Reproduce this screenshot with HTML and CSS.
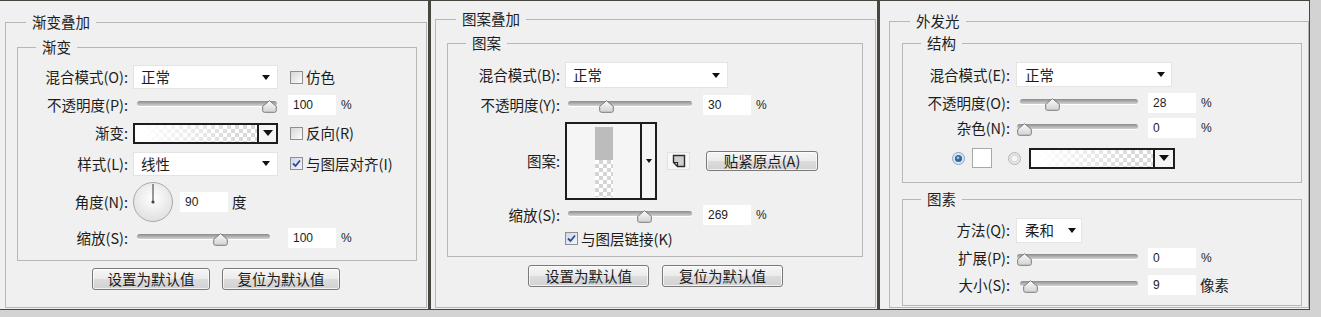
FILE: index.html
```html
<!DOCTYPE html>
<html lang="zh-CN">
<head>
  <meta charset="UTF-8">
  <meta name="viewport" content="width=device-width, initial-scale=1.0">
  <title>图层样式</title>
  <link rel="stylesheet" href="styles.css">
</head>
<body>
  <svg class="defs" width="0" height="0">
    <defs>
      <linearGradient id="thumbFill" x1="0" y1="0" x2="0" y2="1">
        <stop offset="0" stop-color="#fbfbfb"/>
        <stop offset="1" stop-color="#d2d2d2"/>
      </linearGradient>
      <radialGradient id="dialFill" cx="50%" cy="40%" r="60%">
        <stop offset="0" stop-color="#ffffff"/>
        <stop offset="1" stop-color="#e0e0e0"/>
      </radialGradient>
    </defs>
    <symbol id="thumb" viewBox="0 0 15 13">
      <path d="M7.5 .7 L14.3 6.3 V10.5 Q14.3 12.3 12.5 12.3 H2.5 Q.7 12.3 .7 10.5 V6.3 Z" fill="url(#thumbFill)" stroke="#7b7b7b"/>
    </symbol>
    <symbol id="tick" viewBox="0 0 11 11">
      <path d="M2 5.5 L4.5 8 L9 2.5" fill="none" stroke="#2c4a9a" stroke-width="1.8"/>
    </symbol>
  </svg>

  <div class="dialogs">

    <!-- 渐变叠加 -->
    <section class="panel panel-gradient">
      <fieldset class="group outer">
        <legend>渐变叠加</legend>
        <fieldset class="group inner">
          <legend>渐变</legend>
          <div class="rows">
            <div class="row">
              <span class="lbl">混合模式(O):</span>
              <div class="select"><span>正常</span><i class="caret"></i></div>
              <label class="check"><span class="box"></span>仿色</label>
            </div>
            <div class="row">
              <span class="lbl">不透明度(P):</span>
              <div class="slider" style="--v: 1"><div class="track"></div><svg class="thumb"><use href="#thumb"/></svg></div>
              <span class="num">100</span><span class="unit pct">%</span>
            </div>
            <div class="row">
              <span class="lbl">渐变:</span>
              <div class="grad-pick"><span class="grad"></span><span class="drop"><i class="caret"></i></span></div>
              <label class="check"><span class="box"></span>反向(R)</label>
            </div>
            <div class="row">
              <span class="lbl">样式(L):</span>
              <div class="select"><span>线性</span><i class="caret"></i></div>
              <label class="check"><span class="box on"><svg width="11" height="11"><use href="#tick"/></svg></span>与图层对齐(I)</label>
            </div>
            <div class="row">
              <span class="lbl">角度(N):</span>
              <svg class="dial" width="40" height="40" viewBox="0 0 40 40">
                <circle cx="20" cy="20" r="19.5" fill="url(#dialFill)" stroke="#a9a9a9"/>
                <line x1="20" y1="20" x2="20" y2="2" stroke="#555" stroke-width="1.2"/>
                <circle cx="20" cy="20" r="1.6" fill="#444"/>
              </svg>
              <span class="num">90</span><span class="unit">度</span>
            </div>
            <div class="row">
              <span class="lbl">缩放(S):</span>
              <div class="slider short" style="--v: .64"><div class="track"></div><svg class="thumb"><use href="#thumb"/></svg></div>
              <span class="num">100</span><span class="unit pct">%</span>
            </div>
          </div>
        </fieldset>
        <div class="buttons">
          <button class="btn">设置为默认值</button>
          <button class="btn">复位为默认值</button>
        </div>
      </fieldset>
    </section>

    <!-- 图案叠加 -->
    <section class="panel panel-pattern">
      <fieldset class="group outer">
        <legend>图案叠加</legend>
        <fieldset class="group inner">
          <legend>图案</legend>
          <div class="rows">
            <div class="row">
              <span class="lbl">混合模式(B):</span>
              <div class="select"><span>正常</span><i class="caret"></i></div>
            </div>
            <div class="row">
              <span class="lbl">不透明度(Y):</span>
              <div class="slider" style="--v: .28"><div class="track"></div><svg class="thumb"><use href="#thumb"/></svg></div>
              <span class="num">30</span><span class="unit pct">%</span>
            </div>
            <div class="row">
              <span class="lbl">图案:</span>
              <div class="pattern-pick">
                <span class="preview"><span class="pat"></span></span>
                <span class="drop"><i class="caret tiny"></i></span>
              </div>
              <span class="icon-btn">
                <svg width="14" height="14" viewBox="0 0 14 14">
                  <path d="M1.5 1.5 H12.5 V12.5 H5.5 L1.5 8.5 Z" fill="#cfcfcf" stroke="#2b2b2b" stroke-width="1.4"/>
                  <path d="M1.5 8.5 H5.5 V12.5" fill="none" stroke="#2b2b2b" stroke-width="1.2"/>
                </svg>
              </span>
              <button class="btn snap">贴紧原点(A)</button>
            </div>
            <div class="row">
              <span class="lbl">缩放(S):</span>
              <div class="slider" style="--v: .63"><div class="track"></div><svg class="thumb"><use href="#thumb"/></svg></div>
              <span class="num">269</span><span class="unit pct">%</span>
            </div>
            <div class="row">
              <span class="lbl"></span>
              <label class="check flush"><span class="box on"><svg width="11" height="11"><use href="#tick"/></svg></span>与图层链接(K)</label>
            </div>
          </div>
        </fieldset>
        <div class="buttons">
          <button class="btn">设置为默认值</button>
          <button class="btn">复位为默认值</button>
        </div>
      </fieldset>
    </section>

    <!-- 外发光 -->
    <section class="panel panel-glow">
      <fieldset class="group outer">
        <legend>外发光</legend>
        <fieldset class="group inner">
          <legend>结构</legend>
          <div class="rows">
            <div class="row">
              <span class="lbl">混合模式(E):</span>
              <div class="select"><span>正常</span><i class="caret"></i></div>
            </div>
            <div class="row">
              <span class="lbl">不透明度(O):</span>
              <div class="slider" style="--v: .24"><div class="track"></div><svg class="thumb"><use href="#thumb"/></svg></div>
              <span class="num">28</span><span class="unit pct">%</span>
            </div>
            <div class="row">
              <span class="lbl">杂色(N):</span>
              <div class="slider wide" style="--v: 0"><div class="track"></div><svg class="thumb"><use href="#thumb"/></svg></div>
              <span class="num">0</span><span class="unit pct">%</span>
            </div>
            <div class="row radios">
              <svg class="radio" width="13" height="13" viewBox="0 0 13 13">
                <circle cx="6.5" cy="6.5" r="6" fill="#dde7f1" stroke="#8aa2bc"/>
                <circle cx="6.5" cy="6.5" r="3.6" fill="#2d6aa3"/>
                <circle cx="6" cy="5.8" r="1.4" fill="#8fc3ee"/>
              </svg>
              <span class="color-swatch"></span>
              <svg class="radio off" width="13" height="13" viewBox="0 0 13 13">
                <circle cx="6.5" cy="6.5" r="6" fill="#e8e8e8" stroke="#b4b4b4"/>
                <circle cx="6.5" cy="6.5" r="3.6" fill="#f6f6f6" stroke="#d0d0d0"/>
              </svg>
              <div class="grad-pick"><span class="grad"></span><span class="drop"><i class="caret"></i></span></div>
            </div>
          </div>
        </fieldset>
        <fieldset class="group inner">
          <legend>图素</legend>
          <div class="rows">
            <div class="row">
              <span class="lbl">方法(Q):</span>
              <div class="select narrow"><span>柔和</span><i class="caret"></i></div>
            </div>
            <div class="row">
              <span class="lbl">扩展(P):</span>
              <div class="slider wide" style="--v: 0"><div class="track"></div><svg class="thumb"><use href="#thumb"/></svg></div>
              <span class="num">0</span><span class="unit pct">%</span>
            </div>
            <div class="row">
              <span class="lbl">大小(S):</span>
              <div class="slider" style="--v: .03"><div class="track"></div><svg class="thumb"><use href="#thumb"/></svg></div>
              <span class="num">9</span><span class="unit">像素</span>
            </div>
          </div>
        </fieldset>
      </fieldset>
    </section>

  </div>
</body>
</html>
```

FILE: styles.css
```css
body {
  margin: 0;
  background: #d3d3d3;
  color: #1c1c1c;
  font-family: "Noto Sans CJK SC", sans-serif;
  font-size: 14.5px;
  line-height: 16px;
}
.defs {
  position: absolute;
  width: 0;
  height: 0;
}
.dialogs {
  display: flex;
}

/* panels */
.panel {
  box-sizing: border-box;
  height: 310px;
  display: flex;
  flex-direction: column;
  background: #f0f0f0;
  border-top: 1px solid #46463e;
  border-bottom: 1px solid #46463e;
  border-right: 3px solid #47473f;
}
.panel-gradient {
  width: 431px;
  padding: 13px 1px 1px 5px;
}
.panel-pattern {
  width: 449px;
  padding: 10px 1px 1px 4px;
}
.panel-glow {
  width: 430px;
  padding: 12px 0 1px 9px;
  border-right-width: 1px;
}

/* group boxes */
.group {
  margin: 0;
  padding: 0;
  min-width: 0;
  border: 1px solid #b7b7b7;
}
.group legend {
  padding: 0 6px;
  margin-left: 18px;
  line-height: 16px;
}
.outer {
  flex: 1;
}
.outer > legend {
  margin-left: 20px;
}
.panel-gradient .inner {
  margin: 9px 9px 0 11px;
}
.panel-pattern .inner {
  margin: 8px 12px 0 11px;
}
.panel-glow .inner {
  margin: 6px 6px 0 12px;
}
.panel-glow .inner + .inner {
  margin-top: 8px;
}

/* rows */
.rows {
  display: grid;
}
.panel-gradient .rows {
  --lw: 110px;
  --lg: 5px;
  padding: 8px 0;
  grid-template-rows: 28px 28px 28px 33px 44px 28px;
}
.panel-pattern .rows {
  --lw: 112px;
  --lg: 5px;
  padding: 10px 0 8px;
  grid-template-rows: 28px 32px 80px 28px 19px;
}
.panel-glow .rows {
  --lw: 107px;
  --lg: 6px;
  padding: 10px 0 4px;
  grid-template-rows: 27px 30px 20px 40px;
}
.panel-glow .inner + .inner .rows {
  padding: 8px 0 6px;
  grid-template-rows: 30px 26px 28px;
}
.row {
  display: flex;
  align-items: center;
}
.lbl {
  flex: none;
  width: var(--lw);
  margin-right: var(--lg);
  text-align: right;
  white-space: nowrap;
}

/* dropdowns */
.select {
  box-sizing: border-box;
  flex: none;
  display: flex;
  align-items: center;
  justify-content: space-between;
  width: 145px;
  height: 24px;
  padding: 0 7px;
  background: #fff;
  border: 1px solid #e4e4e4;
}
.panel-pattern .select {
  width: 163px;
  height: 26px;
}
.panel-glow .select {
  width: 156px;
  height: 25px;
  padding: 0 6px 0 8px;
}
.panel-glow .select.narrow {
  width: 66px;
  padding-right: 5px;
}
.caret {
  width: 0;
  height: 0;
  border-left: 4px solid transparent;
  border-right: 4px solid transparent;
  border-top: 5px solid #111;
}

/* checkboxes */
.check {
  display: flex;
  align-items: center;
  margin-left: 12px;
  white-space: nowrap;
}
.check.flush {
  margin-left: 0;
}
.box {
  box-sizing: border-box;
  display: flex;
  align-items: center;
  justify-content: center;
  width: 13px;
  height: 13px;
  margin-right: 3px;
  border: 1px solid #8f8f8f;
  background: linear-gradient(135deg, #d6d6d6, #fdfdfd);
}
.box.on {
  background: linear-gradient(135deg, #cdd7e8, #f4f7fb);
}

/* sliders */
.slider {
  position: relative;
  flex: none;
  width: 140px;
  height: 20px;
  margin: 0 11px 0 4px;
}
.slider.short {
  width: 133px;
  margin-right: 18px;
}
.panel-pattern .slider {
  width: 124px;
  margin: 0 11px 0 3px;
}
.panel-glow .slider {
  width: 118px;
  margin: 0 10px 0 4px;
}
.panel-glow .slider.wide {
  width: 121px;
  margin-left: 1px;
}
.track {
  margin-top: 6px;
  height: 5px;
  border-radius: 3px;
  background: linear-gradient(#8b8b8b, #b7b7b7 60%, #d2d2d2);
  box-shadow: 0 1px 0 #fff;
}
.thumb {
  position: absolute;
  top: 5px;
  left: calc(var(--v) * (100% - 15px));
  width: 15px;
  height: 13px;
}

/* number fields */
.num {
  box-sizing: border-box;
  flex: none;
  width: 48px;
  height: 20px;
  padding-left: 5px;
  background: #fff;
  font: 12px/20px "Liberation Sans", sans-serif;
}
.unit {
  margin-left: 4px;
}
.unit.pct {
  margin-left: 5px;
  font: 12px "Liberation Sans", sans-serif;
}

/* gradient & pattern pickers */
.grad-pick {
  box-sizing: border-box;
  flex: none;
  display: flex;
  width: 145px;
  height: 21px;
  border: 2px solid #1d1d1d;
  background: #fff;
}
.grad {
  flex: 1;
  background:
    linear-gradient(to right, #fff 5%, rgba(255, 255, 255, 0) 85%),
    repeating-conic-gradient(#d9d9d9 0 25%, #fff 0 50%) 0 0 / 8px 8px;
}
.drop {
  width: 17px;
  display: flex;
  align-items: center;
  justify-content: center;
  border-left: 2px solid #1d1d1d;
  background: #f4f4f4;
}
.grad-pick .caret {
  border-width: 6px 5px 0;
}
.panel-glow .grad-pick {
  width: 146px;
  margin-left: 8px;
}
.panel-glow .drop {
  width: 18px;
}
.pattern-pick {
  box-sizing: border-box;
  flex: none;
  display: flex;
  width: 92px;
  height: 78px;
  border: 2px solid #1d1d1d;
}
.preview {
  flex: 1;
  display: flex;
  align-items: center;
  justify-content: center;
  background: #f5f5f5;
}
.pat {
  width: 18px;
  height: 70px;
  margin-top: 2px;
  background:
    linear-gradient(#bcbcbc, #bcbcbc) top / 100% 33px no-repeat,
    repeating-conic-gradient(#d4d4d4 0 25%, #fff 0 50%) 0 1px / 8px 8px;
}
.pattern-pick .drop {
  width: 13px;
  background: #f5f5f5;
}
.caret.tiny {
  border-width: 4px 3px 0;
}
.icon-btn {
  box-sizing: border-box;
  display: flex;
  align-items: center;
  justify-content: center;
  width: 23px;
  height: 18px;
  margin-left: 10px;
  border: 1px solid #e0e0e0;
  background: #f8f8f8;
}

/* angle dial */
.dial {
  flex: none;
  margin-right: 7px;
}

/* glow colour row */
.radios {
  padding-left: 49px;
}
.color-swatch {
  box-sizing: border-box;
  width: 20px;
  height: 20px;
  margin-left: 7px;
  border: 1px solid #a8a8a8;
  background: #fff;
}
.radio.off {
  margin-left: 16px;
}

/* push buttons */
.buttons {
  display: flex;
  justify-content: center;
  gap: 12px;
  margin-top: 7px;
}
.panel-pattern .buttons {
  gap: 13px;
  margin-top: 8px;
}
.btn {
  box-sizing: border-box;
  width: 118px;
  height: 22px;
  padding: 0;
  border: 1px solid #7a7a7a;
  border-radius: 3px;
  background: linear-gradient(#f6f6f6, #ebebeb 48%, #dcdcdc 52%, #d2d2d2);
  box-shadow: inset 0 0 0 1px rgba(255, 255, 255, .7);
  color: inherit;
  font: inherit;
  line-height: 18px;
}
.panel-pattern .btn {
  width: 121px;
}
.btn.snap {
  width: 112px;
  height: 20px;
  margin-left: 16px;
}
```
